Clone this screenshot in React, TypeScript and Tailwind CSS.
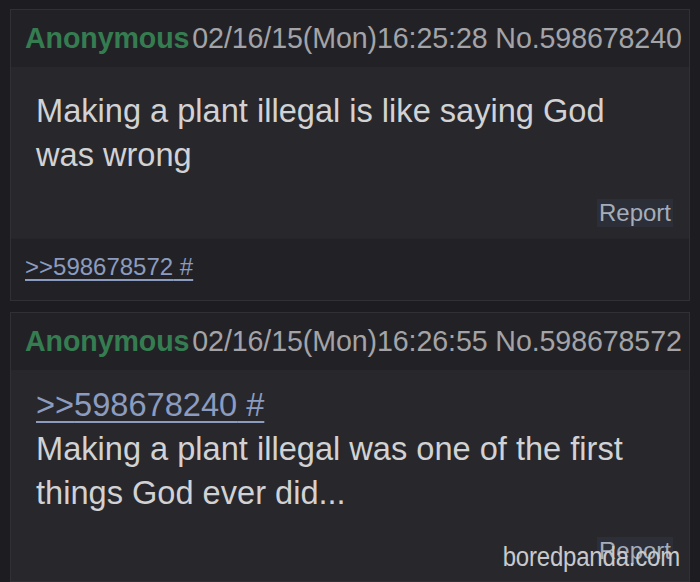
import React from "react";

type Post = {
  time: string;
  no: string;
  quote?: string;
  lines: string[];
  backlink?: string;
};

const posts: Post[] = [
  {
    time: "02/16/15(Mon)16:25:28",
    no: "598678240",
    lines: ["Making a plant illegal is like saying God", "was wrong"],
    backlink: "598678572",
  },
  {
    time: "02/16/15(Mon)16:26:55",
    no: "598678572",
    quote: "598678240",
    lines: ["Making a plant illegal was one of the first", "things God ever did..."],
  },
];

function PostCard({ post, last }: { post: Post; last?: boolean }) {
  return (
    <div className={`border border-[#303035] bg-[#28282c] ${last ? "flex-1" : ""}`}>
      {/* Header */}
      <div className="h-[57px] bg-[#222226] pl-[14px] flex items-center whitespace-nowrap text-[28.6px] leading-none tracking-[-0.1px]">
        <span className="font-bold text-[#357d51]">Anonymous</span>
        <span className="ml-[3px] text-[#a4a4a8]">
          {post.time} No.{post.no}
        </span>
      </div>

      {/* Body */}
      <div className={`pl-[25px] pr-[16px] ${post.quote ? "pt-[13px]" : "pt-[22px]"} text-[32.6px] leading-[44px] text-[#d2d2d4]`}>
        {post.quote && (
          <div className="text-[#8c9cc0] underline decoration-[2px] underline-offset-[5px]">
            &gt;&gt;{post.quote} #
          </div>
        )}
        {post.lines.map((l) => (
          <div key={l}>{l}</div>
        ))}
        <div className="flex justify-end mt-[22px] pb-[11px] relative">
          <span className="bg-[#2c2f37] px-[2px] text-[24px] leading-[28px] text-[#a6adba]">
            Report
          </span>
          {last && (
            <span className="absolute right-[-7px] top-[8px] text-[24px] leading-none tracking-[-0.2px] text-[#c9c9cb] scale-y-[1.15]">
              boredpanda.com
            </span>
          )}
        </div>
      </div>

      {/* Backlinks */}
      {post.backlink && (
        <div className="h-[62px] bg-[#222226] px-[14px] pt-[15px] border-t border-[#26262a]">
          <span className="text-[24px] leading-[26px] text-[#8c9cc0] underline decoration-[2px] underline-offset-[4px]">
            &gt;&gt;{post.backlink} #
          </span>
        </div>
      )}
    </div>
  );
}

export default function App() {
  return (
    <div
      className="w-[700px] h-[582px] overflow-hidden bg-[#1d1d21] pt-[9px] px-[10px] flex flex-col gap-[11px]"
      style={{ fontFamily: '"Liberation Sans", Arial, sans-serif' }}
    >
      {posts.map((p, i) => (
        <PostCard key={p.no} post={p} last={i === posts.length - 1} />
      ))}
    </div>
  );
}
